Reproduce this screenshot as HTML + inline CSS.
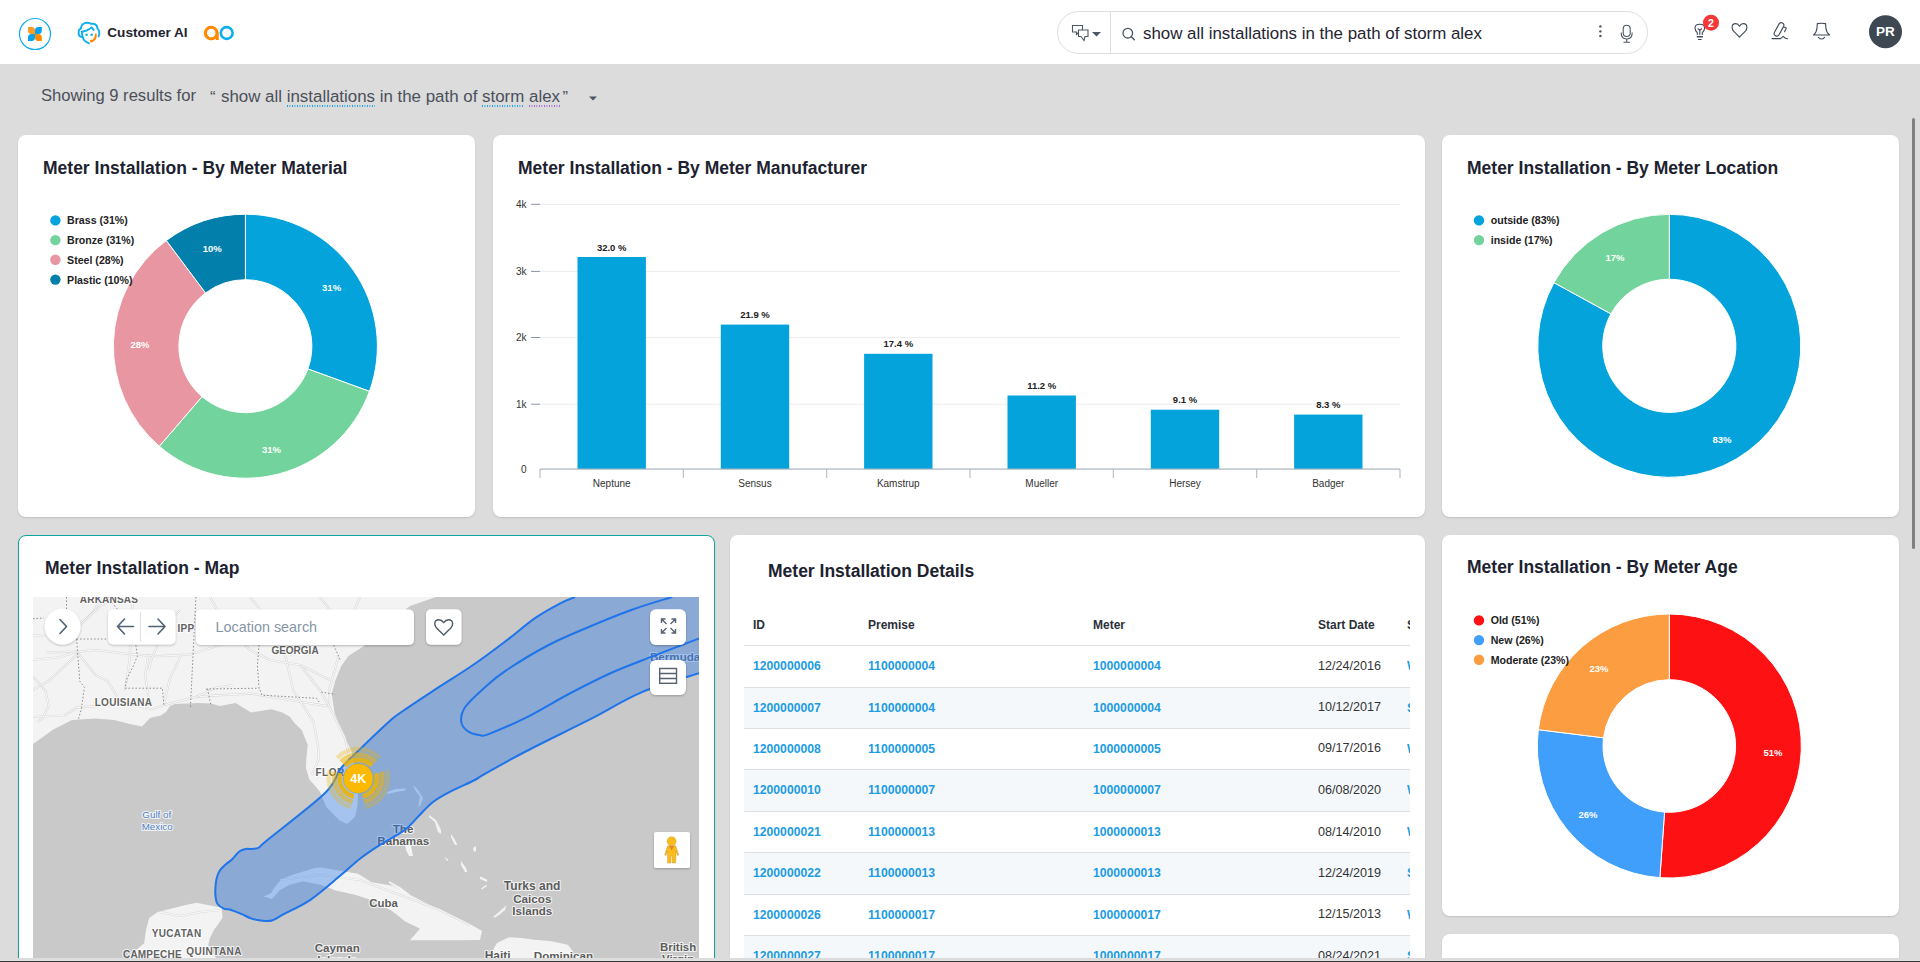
<!DOCTYPE html>
<html><head><meta charset="utf-8"><style>
*{box-sizing:border-box;margin:0;padding:0}
html,body{width:1920px;height:962px;overflow:hidden;background:#dcdcdc;font-family:"Liberation Sans",sans-serif;color:#1f2430}
.abs{position:absolute}
#hdr{position:absolute;left:0;top:0;width:1920px;height:64px;background:#fff}
.card{position:absolute;background:#fff;border-radius:8px;box-shadow:0 1px 2px rgba(0,0,0,.13)}
.ttl{position:absolute;font-size:17.5px;font-weight:bold;color:#1d2230;white-space:nowrap}
svg text{font-family:"Liberation Sans",sans-serif}
.u1,.u2{background-image:linear-gradient(to right,#0aa0e6 50%,transparent 50%);background-size:2.5px 1.5px;background-repeat:repeat-x;background-position:0 18px;padding-bottom:3px}
.u2{background-image:linear-gradient(to right,#9b5fd6 50%,transparent 50%)}
</style></head><body>
<div id="hdr">
  <svg class="abs" style="left:0;top:0" width="260" height="64">
    <circle cx="35" cy="34" r="15.5" fill="none" stroke="#0eaaf0" stroke-width="1.2"/>
    <path d="M28 27 L31.5 27 Q35 27 35 30.5 L35 34 L31.5 34 Q28 34 28 30.5 Z" fill="#ff9a22"/>
    <path d="M41.8 27 L38.3 27 Q35 27 35 30.5 L35 34 L38.3 34 Q41.8 34 41.8 30.5 Z" fill="#07a3ef"/>
    <path d="M28 41 L31.5 41 Q35 41 35 37.5 L35 34 L31.5 34 Q28 34 28 37.5 Z" fill="#07a3ef"/>
    <path d="M41.8 41 L38.3 41 Q35 41 35 37.5 L35 34 L38.3 34 Q41.8 34 41.8 37.5 Z" fill="#ff8a00"/>
    <g fill="none" stroke="#0fb0ee" stroke-width="1.9" stroke-linecap="round" stroke-linejoin="round">
      <path d="M81.5 37 Q78.7 36 78.7 34 L78.7 31.2 Q78.7 29.2 81 28.6 Q80.8 25.5 83.5 23.8 Q85.5 22.6 87.8 22.8 Q89.8 23 91.1 23.9 Q93 23.6 94.8 24.1 Q97.3 25.2 97.6 28.8 Q99.3 30 99.3 33 Q99.3 35 98.6 36.4"/>
      <path d="M82 31.8 Q87 30.8 89.5 29 Q90.8 28.2 91.6 27.4 Q92.8 28.6 93.6 30"/>
      <path d="M82 31.8 Q82 37.5 84.3 40.4 Q86.2 42.3 89 43.3"/>
    </g>
    <circle cx="86.6" cy="34.7" r="1.25" fill="#0fb0ee"/><circle cx="91.6" cy="34.7" r="1.25" fill="#0fb0ee"/>
    <path d="M95.8 34.5 Q96 38.5 93.5 40.2 Q92.5 40.9 91.5 41" fill="none" stroke="#ff8a00" stroke-width="1.9" stroke-linecap="round"/>
    <circle cx="91.5" cy="41" r="1.5" fill="#ff8a00"/>
    <text x="107.3" y="37" font-family="Liberation Sans" font-size="13.6" font-weight="bold" fill="#1f2430">Customer AI</text>
    <path d="M217.2 40 L217.2 33 A5.8 5.8 0 1 0 217.2 33.2" fill="none" stroke="#ff8a00" stroke-width="2.6"/>
    <circle cx="211" cy="33" r="5.9" fill="none" stroke="#ff8a00" stroke-width="2.6"/>
    <rect x="215.9" y="32" width="2.6" height="8" fill="#ff8a00"/>
    <circle cx="226.7" cy="33" r="5.9" fill="none" stroke="#0aaeef" stroke-width="2.6"/>
  </svg>
  <!-- search -->
  <div class="abs" style="left:1057px;top:11px;width:591px;height:43px;border:1px solid #dedede;border-radius:22px;background:#fff"></div>
  <div class="abs" style="left:1110px;top:12px;width:1px;height:41px;background:#dedede"></div>
  <svg class="abs" style="left:1060px;top:12px" width="590" height="42">
    <g fill="none" stroke="#4a5664" stroke-width="1.1">
      <path d="M12.5 13.5 H22.5 V20 H19 L16.5 22.5 V20 H12.5 Z"/>
      <path d="M18.5 18 H28 V24.5 H25 L24 28.5 L21 24.5 H18.5 Z" fill="#fff"/>
    </g>
    <path d="M32 20 L41 20 L36.5 24.5 Z" fill="#4a5664"/>
    <circle cx="67.8" cy="21.2" r="4.8" fill="none" stroke="#4a5664" stroke-width="1.3"/>
    <path d="M71.3 24.8 L74.3 27.8" stroke="#4a5664" stroke-width="1.5" stroke-linecap="round"/>
    <circle cx="540.4" cy="14.4" r="1.2" fill="#4a5664"/><circle cx="540.4" cy="19.4" r="1.2" fill="#4a5664"/><circle cx="540.4" cy="24" r="1.2" fill="#4a5664"/>
    <g fill="none" stroke="#4a5664" stroke-width="1.1">
      <rect x="563.2" y="13.2" width="7" height="11.3" rx="3.5"/>
      <path d="M561.2 20.5 Q561.2 27 566.7 27 Q572.2 27 572.2 20.5 M566.7 27 V30 M563.5 30.2 H570"/>
    </g>
  </svg>
  <div class="abs" style="left:1143px;top:23.5px;font-size:16.9px;color:#1f2430;white-space:nowrap">show all installations in the path of storm alex</div>
  <!-- right icons -->
  <svg class="abs" style="left:1680px;top:0" width="240" height="64">
    <g fill="none" stroke="#3f4a58" stroke-width="1.1" stroke-linecap="round" stroke-linejoin="round">
      <path d="M17.3 34.5 V32.6 Q15 30.6 15 27.9 Q15 24.2 19.8 24.2 Q24.6 24.2 24.6 27.9 Q24.6 30.6 22.3 32.6 V34.5"/>
      <path d="M19.8 34.5 V29.8 M18 28.8 L19.8 30.2 L21.6 28.8"/>
      <path d="M17.3 36.8 H22.3" stroke-width="1.5"/><path d="M18.4 39.5 H21.2" stroke-width="1.1"/>
      <path d="M59.5 37.2 L53.6 31.2 Q52.1 29.5 52.1 27.4 Q52.1 23.6 55.8 23.6 Q58 23.6 59.5 26.3 Q61 23.6 63.2 23.6 Q66.9 23.6 66.9 27.4 Q66.9 29.5 65.4 31.2 Z"/>
      <rect x="-2.6" y="-7.2" width="5.2" height="14.4" rx="2.6" transform="translate(99 29.4) rotate(29)"/>
      <path d="M103.8 27 L106.3 28 L104.6 31.8"/>
      <path d="M92 38.6 H100.5 L103.2 36.3 L105.5 38.3 L107.5 38.8"/>
      <path d="M133.6 35 Q136.6 32.5 137 28 L137.3 23.6 Q141.4 23 145.6 23.6 L145.9 28 Q146.3 32.5 149.6 35 Z"/>
      <path d="M138.4 37.3 Q141.5 40.8 144.6 37.3"/>
    </g>
    <circle cx="31" cy="22.7" r="8" fill="#f43838"/>
    <text x="31" y="26.6" text-anchor="middle" font-family="Liberation Sans" font-size="10.5" font-weight="bold" fill="#fff">2</text>
    <circle cx="205.5" cy="31.7" r="16.5" fill="#3d4852"/>
    <text x="205.5" y="35.8" text-anchor="middle" font-family="Liberation Sans" font-size="13.5" font-weight="bold" fill="#fff">PR</text>
  </svg>
</div>


<div class="abs" style="left:41px;top:86px;font-size:16.6px;color:#4a4f5a;white-space:nowrap">Showing 9 results for</div>
<div class="abs" style="left:210px;top:88px;font-size:16.6px;color:#4a4f5a;white-space:nowrap">&#8220;</div>
<div id="q" class="abs" style="left:221px;top:87px;font-size:16.9px;color:#4a4f5a;white-space:nowrap">show all <span class="u1">installations</span> in the path of <span class="u1">storm</span> <span class="u2">alex</span></div>
<div class="abs" style="left:562.5px;top:88px;font-size:16.6px;color:#4a4f5a;white-space:nowrap">&#8221;</div>
<svg class="abs" style="left:588px;top:95px" width="12" height="8"><path d="M1 1.5 L9 1.5 L5 5.5 Z" fill="#4a5664"/></svg>


<div class="card" style="left:18px;top:135px;width:457px;height:382px">
  <div class="ttl" style="left:25px;top:22.5px">Meter Installation - By Meter Material</div>
</div>
<div class="card" style="left:493px;top:135px;width:932px;height:382px">
  <div class="ttl" style="left:25px;top:22.5px">Meter Installation - By Meter Manufacturer</div>
</div>
<div class="card" style="left:1442px;top:135px;width:457px;height:382px">
  <div class="ttl" style="left:25px;top:22.5px">Meter Installation - By Meter Location</div>
</div>
<div class="card" style="left:18px;top:535px;width:697px;height:500px;border:1px solid #0ea59f">
  <div class="ttl" style="left:26px;top:22px">Meter Installation - Map</div>
</div>
<div class="card" style="left:730px;top:535px;width:695px;height:500px">
  <div class="ttl" style="left:38px;top:26px">Meter Installation Details</div>
</div>
<div class="card" style="left:1442px;top:535px;width:457px;height:381px">
  <div class="ttl" style="left:25px;top:22px">Meter Installation - By Meter Age</div>
</div>
<div class="card" style="left:1442px;top:934px;width:457px;height:200px"></div>

<svg class="abs" style="left:0;top:0" width="1920" height="962">
<path d="M245.40 214.20 A132 132 0 0 1 369.44 391.35 L307.89 368.94 A66.5 66.5 0 0 0 245.40 279.70 Z" fill="#04a3db" stroke="#fff" stroke-width="1"/>
<path d="M369.44 391.35 A132 132 0 0 1 159.32 446.27 L202.04 396.62 A66.5 66.5 0 0 0 307.89 368.94 Z" fill="#72d39c" stroke="#fff" stroke-width="1"/>
<path d="M159.32 446.27 A132 132 0 0 1 166.33 240.50 L205.56 292.95 A66.5 66.5 0 0 0 202.04 396.62 Z" fill="#e896a1" stroke="#fff" stroke-width="1"/>
<path d="M166.33 240.50 A132 132 0 0 1 245.40 214.20 L245.40 279.70 A66.5 66.5 0 0 0 205.56 292.95 Z" fill="#037fab" stroke="#fff" stroke-width="1"/>
<circle cx="55.4" cy="220.4" r="5.2" fill="#04a3db"/>
<text x="67.1" y="224.4" font-size="10.6" font-weight="bold" fill="#222">Brass (31%)</text>
<circle cx="55.4" cy="240.1" r="5.2" fill="#72d39c"/>
<text x="67.1" y="244.1" font-size="10.6" font-weight="bold" fill="#222">Bronze (31%)</text>
<circle cx="55.4" cy="259.7" r="5.2" fill="#e896a1"/>
<text x="67.1" y="263.7" font-size="10.6" font-weight="bold" fill="#222">Steel (28%)</text>
<circle cx="55.4" cy="279.6" r="5.2" fill="#037fab"/>
<text x="67.1" y="283.6" font-size="10.6" font-weight="bold" fill="#222">Plastic (10%)</text>
<text x="331.6" y="291.4" text-anchor="middle" font-size="9.5" font-weight="bold" fill="#fff">31%</text>
<text x="271.4" y="453.1" text-anchor="middle" font-size="9.5" font-weight="bold" fill="#fff">31%</text>
<text x="140" y="348.3" text-anchor="middle" font-size="9.5" font-weight="bold" fill="#fff">28%</text>
<text x="212.3" y="252.2" text-anchor="middle" font-size="9.5" font-weight="bold" fill="#fff">10%</text>
<path d="M1669.30 214.30 A131.5 131.5 0 1 1 1553.96 282.65 L1610.88 313.82 A66.6 66.6 0 1 0 1669.30 279.20 Z" fill="#04a3db" stroke="#fff" stroke-width="1"/>
<path d="M1553.96 282.65 A131.5 131.5 0 0 1 1669.30 214.30 L1669.30 279.20 A66.6 66.6 0 0 0 1610.88 313.82 Z" fill="#72d39c" stroke="#fff" stroke-width="1"/>
<circle cx="1479" cy="220.4" r="5.2" fill="#04a3db"/>
<text x="1490.7" y="224.4" font-size="10.6" font-weight="bold" fill="#222">outside (83%)</text>
<circle cx="1479" cy="240.1" r="5.2" fill="#72d39c"/>
<text x="1490.7" y="244.1" font-size="10.6" font-weight="bold" fill="#222">inside (17%)</text>
<text x="1615" y="261.0" text-anchor="middle" font-size="9.5" font-weight="bold" fill="#fff">17%</text>
<text x="1722" y="443.0" text-anchor="middle" font-size="9.5" font-weight="bold" fill="#fff">83%</text>
<path d="M1669.30 614.00 A132 132 0 1 1 1659.86 877.66 L1664.56 812.13 A66.3 66.3 0 1 0 1669.30 679.70 Z" fill="#fe1112" stroke="#fff" stroke-width="1"/>
<path d="M1659.86 877.66 A132 132 0 0 1 1538.31 729.68 L1603.51 737.81 A66.3 66.3 0 0 0 1664.56 812.13 Z" fill="#3f9ffb" stroke="#fff" stroke-width="1"/>
<path d="M1538.31 729.68 A132 132 0 0 1 1669.30 614.00 L1669.30 679.70 A66.3 66.3 0 0 0 1603.51 737.81 Z" fill="#fb9d40" stroke="#fff" stroke-width="1"/>
<circle cx="1479" cy="620.4" r="5.2" fill="#fe1112"/>
<text x="1490.7" y="624.4" font-size="10.6" font-weight="bold" fill="#222">Old (51%)</text>
<circle cx="1479" cy="640.1" r="5.2" fill="#3f9ffb"/>
<text x="1490.7" y="644.1" font-size="10.6" font-weight="bold" fill="#222">New (26%)</text>
<circle cx="1479" cy="659.7" r="5.2" fill="#fb9d40"/>
<text x="1490.7" y="663.7" font-size="10.6" font-weight="bold" fill="#222">Moderate (23%)</text>
<text x="1773" y="755.5" text-anchor="middle" font-size="9.5" font-weight="bold" fill="#fff">51%</text>
<text x="1588" y="818.0" text-anchor="middle" font-size="9.5" font-weight="bold" fill="#fff">26%</text>
<text x="1599" y="671.5" text-anchor="middle" font-size="9.5" font-weight="bold" fill="#fff">23%</text>
<rect x="540" y="203.8" width="860" height="1" fill="#ececec"/>
<rect x="531" y="203.8" width="9" height="1" fill="#8a96a3"/>
<text x="526.5" y="207.9" text-anchor="end" font-size="10" fill="#333">4k</text>
<rect x="540" y="270.9" width="860" height="1" fill="#ececec"/>
<rect x="531" y="270.9" width="9" height="1" fill="#8a96a3"/>
<text x="526.5" y="275.0" text-anchor="end" font-size="10" fill="#333">3k</text>
<rect x="540" y="337.0" width="860" height="1" fill="#ececec"/>
<rect x="531" y="337.0" width="9" height="1" fill="#8a96a3"/>
<text x="526.5" y="341.1" text-anchor="end" font-size="10" fill="#333">2k</text>
<rect x="540" y="403.7" width="860" height="1" fill="#ececec"/>
<rect x="531" y="403.7" width="9" height="1" fill="#8a96a3"/>
<text x="526.5" y="407.8" text-anchor="end" font-size="10" fill="#333">1k</text>
<text x="526.5" y="473" text-anchor="end" font-size="10" fill="#333">0</text>
<rect x="577.5" y="257" width="68.4" height="212.0" fill="#04a3db"/>
<text x="611.7" y="250.5" text-anchor="middle" font-size="9.5" font-weight="bold" fill="#222">32.0 %</text>
<text x="611.7" y="487" text-anchor="middle" font-size="10" fill="#333">Neptune</text>
<rect x="720.8" y="324.6" width="68.4" height="144.4" fill="#04a3db"/>
<text x="755.0" y="318.1" text-anchor="middle" font-size="9.5" font-weight="bold" fill="#222">21.9 %</text>
<text x="755.0" y="487" text-anchor="middle" font-size="10" fill="#333">Sensus</text>
<rect x="864.1" y="353.8" width="68.4" height="115.2" fill="#04a3db"/>
<text x="898.3" y="347.3" text-anchor="middle" font-size="9.5" font-weight="bold" fill="#222">17.4 %</text>
<text x="898.3" y="487" text-anchor="middle" font-size="10" fill="#333">Kamstrup</text>
<rect x="1007.5" y="395.5" width="68.4" height="73.5" fill="#04a3db"/>
<text x="1041.7" y="389.0" text-anchor="middle" font-size="9.5" font-weight="bold" fill="#222">11.2 %</text>
<text x="1041.7" y="487" text-anchor="middle" font-size="10" fill="#333">Mueller</text>
<rect x="1150.8" y="409.7" width="68.4" height="59.3" fill="#04a3db"/>
<text x="1185.0" y="403.2" text-anchor="middle" font-size="9.5" font-weight="bold" fill="#222">9.1 %</text>
<text x="1185.0" y="487" text-anchor="middle" font-size="10" fill="#333">Hersey</text>
<rect x="1294.1" y="414.6" width="68.4" height="54.4" fill="#04a3db"/>
<text x="1328.3" y="408.1" text-anchor="middle" font-size="9.5" font-weight="bold" fill="#222">8.3 %</text>
<text x="1328.3" y="487" text-anchor="middle" font-size="10" fill="#333">Badger</text>
<rect x="540" y="468.5" width="860" height="1.2" fill="#aab4bf"/>
<rect x="539.5" y="469" width="1" height="9" fill="#aab4bf"/>
<rect x="682.8" y="469" width="1" height="9" fill="#aab4bf"/>
<rect x="826.2" y="469" width="1" height="9" fill="#aab4bf"/>
<rect x="969.5" y="469" width="1" height="9" fill="#aab4bf"/>
<rect x="1112.8" y="469" width="1" height="9" fill="#aab4bf"/>
<rect x="1256.2" y="469" width="1" height="9" fill="#aab4bf"/>
<rect x="1399.5" y="469" width="1" height="9" fill="#aab4bf"/>
</svg>
<div class="abs" style="left:744px;top:590px;width:666px;height:368px;overflow:hidden">
<div class="abs" style="left:9px;top:28.2px;white-space:nowrap;font-size:12px;font-weight:bold;color:#2b2f38">ID</div>
<div class="abs" style="left:124px;top:28.2px;white-space:nowrap;font-size:12px;font-weight:bold;color:#2b2f38">Premise</div>
<div class="abs" style="left:349px;top:28.2px;white-space:nowrap;font-size:12px;font-weight:bold;color:#2b2f38">Meter</div>
<div class="abs" style="left:574px;top:28.2px;white-space:nowrap;font-size:12px;font-weight:bold;color:#2b2f38">Start Date</div>
<div class="abs" style="left:663px;top:28.2px;white-space:nowrap;font-size:12px;font-weight:bold;color:#2b2f38">Status</div>
<div class="abs" style="left:9px;top:68.9px;white-space:nowrap;font-size:12.2px;font-weight:bold;color:#1b9ce2">1200000006</div>
<div class="abs" style="left:124px;top:68.9px;white-space:nowrap;font-size:12.2px;font-weight:bold;color:#1b9ce2">1100000004</div>
<div class="abs" style="left:349px;top:68.9px;white-space:nowrap;font-size:12.2px;font-weight:bold;color:#1b9ce2">1000000004</div>
<div class="abs" style="left:574px;top:68.7px;white-space:nowrap;font-size:12.6px;color:#333">12/24/2016</div>
<div class="abs" style="left:663px;top:68.9px;white-space:nowrap;font-size:12.2px;font-weight:bold;color:#1b9ce2">Water</div>
<div class="abs" style="left:0;top:97.7px;width:666px;height:41.4px;background:#f5f8fb"></div>
<div class="abs" style="left:9px;top:110.5px;white-space:nowrap;font-size:12.2px;font-weight:bold;color:#1b9ce2">1200000007</div>
<div class="abs" style="left:124px;top:110.5px;white-space:nowrap;font-size:12.2px;font-weight:bold;color:#1b9ce2">1100000004</div>
<div class="abs" style="left:349px;top:110.5px;white-space:nowrap;font-size:12.2px;font-weight:bold;color:#1b9ce2">1000000004</div>
<div class="abs" style="left:574px;top:110.3px;white-space:nowrap;font-size:12.6px;color:#333">10/12/2017</div>
<div class="abs" style="left:663px;top:110.5px;white-space:nowrap;font-size:12.2px;font-weight:bold;color:#1b9ce2">Sewer</div>
<div class="abs" style="left:9px;top:151.6px;white-space:nowrap;font-size:12.2px;font-weight:bold;color:#1b9ce2">1200000008</div>
<div class="abs" style="left:124px;top:151.6px;white-space:nowrap;font-size:12.2px;font-weight:bold;color:#1b9ce2">1100000005</div>
<div class="abs" style="left:349px;top:151.6px;white-space:nowrap;font-size:12.2px;font-weight:bold;color:#1b9ce2">1000000005</div>
<div class="abs" style="left:574px;top:151.4px;white-space:nowrap;font-size:12.6px;color:#333">09/17/2016</div>
<div class="abs" style="left:663px;top:151.6px;white-space:nowrap;font-size:12.2px;font-weight:bold;color:#1b9ce2">Water</div>
<div class="abs" style="left:0;top:179.9px;width:666px;height:42.3px;background:#f5f8fb"></div>
<div class="abs" style="left:9px;top:193.1px;white-space:nowrap;font-size:12.2px;font-weight:bold;color:#1b9ce2">1200000010</div>
<div class="abs" style="left:124px;top:193.1px;white-space:nowrap;font-size:12.2px;font-weight:bold;color:#1b9ce2">1100000007</div>
<div class="abs" style="left:349px;top:193.1px;white-space:nowrap;font-size:12.2px;font-weight:bold;color:#1b9ce2">1000000007</div>
<div class="abs" style="left:574px;top:192.9px;white-space:nowrap;font-size:12.6px;color:#333">06/08/2020</div>
<div class="abs" style="left:663px;top:193.1px;white-space:nowrap;font-size:12.2px;font-weight:bold;color:#1b9ce2">Water</div>
<div class="abs" style="left:9px;top:234.8px;white-space:nowrap;font-size:12.2px;font-weight:bold;color:#1b9ce2">1200000021</div>
<div class="abs" style="left:124px;top:234.8px;white-space:nowrap;font-size:12.2px;font-weight:bold;color:#1b9ce2">1100000013</div>
<div class="abs" style="left:349px;top:234.8px;white-space:nowrap;font-size:12.2px;font-weight:bold;color:#1b9ce2">1000000013</div>
<div class="abs" style="left:574px;top:234.6px;white-space:nowrap;font-size:12.6px;color:#333">08/14/2010</div>
<div class="abs" style="left:663px;top:234.8px;white-space:nowrap;font-size:12.2px;font-weight:bold;color:#1b9ce2">Water</div>
<div class="abs" style="left:0;top:263.1px;width:666px;height:41.7px;background:#f5f8fb"></div>
<div class="abs" style="left:9px;top:276.1px;white-space:nowrap;font-size:12.2px;font-weight:bold;color:#1b9ce2">1200000022</div>
<div class="abs" style="left:124px;top:276.1px;white-space:nowrap;font-size:12.2px;font-weight:bold;color:#1b9ce2">1100000013</div>
<div class="abs" style="left:349px;top:276.1px;white-space:nowrap;font-size:12.2px;font-weight:bold;color:#1b9ce2">1000000013</div>
<div class="abs" style="left:574px;top:275.9px;white-space:nowrap;font-size:12.6px;color:#333">12/24/2019</div>
<div class="abs" style="left:663px;top:276.1px;white-space:nowrap;font-size:12.2px;font-weight:bold;color:#1b9ce2">Sewer</div>
<div class="abs" style="left:9px;top:317.6px;white-space:nowrap;font-size:12.2px;font-weight:bold;color:#1b9ce2">1200000026</div>
<div class="abs" style="left:124px;top:317.6px;white-space:nowrap;font-size:12.2px;font-weight:bold;color:#1b9ce2">1100000017</div>
<div class="abs" style="left:349px;top:317.6px;white-space:nowrap;font-size:12.2px;font-weight:bold;color:#1b9ce2">1000000017</div>
<div class="abs" style="left:574px;top:317.4px;white-space:nowrap;font-size:12.6px;color:#333">12/15/2013</div>
<div class="abs" style="left:663px;top:317.6px;white-space:nowrap;font-size:12.2px;font-weight:bold;color:#1b9ce2">Water</div>
<div class="abs" style="left:0;top:346.2px;width:666px;height:41.5px;background:#f5f8fb"></div>
<div class="abs" style="left:9px;top:359.1px;white-space:nowrap;font-size:12.2px;font-weight:bold;color:#1b9ce2">1200000027</div>
<div class="abs" style="left:124px;top:359.1px;white-space:nowrap;font-size:12.2px;font-weight:bold;color:#1b9ce2">1100000017</div>
<div class="abs" style="left:349px;top:359.1px;white-space:nowrap;font-size:12.2px;font-weight:bold;color:#1b9ce2">1000000017</div>
<div class="abs" style="left:574px;top:358.9px;white-space:nowrap;font-size:12.6px;color:#333">08/24/2021</div>
<div class="abs" style="left:663px;top:359.1px;white-space:nowrap;font-size:12.2px;font-weight:bold;color:#1b9ce2">Sewer</div>
<div class="abs" style="left:0;top:54.9px;width:666px;height:1.3px;background:#dddfe2"></div>
<div class="abs" style="left:0;top:96.7px;width:666px;height:1.3px;background:#dddfe2"></div>
<div class="abs" style="left:0;top:138.1px;width:666px;height:1.3px;background:#dddfe2"></div>
<div class="abs" style="left:0;top:178.9px;width:666px;height:1.3px;background:#dddfe2"></div>
<div class="abs" style="left:0;top:221.2px;width:666px;height:1.3px;background:#dddfe2"></div>
<div class="abs" style="left:0;top:262.1px;width:666px;height:1.3px;background:#dddfe2"></div>
<div class="abs" style="left:0;top:303.8px;width:666px;height:1.3px;background:#dddfe2"></div>
<div class="abs" style="left:0;top:345.2px;width:666px;height:1.3px;background:#dddfe2"></div>
</div>
<svg class="abs" style="left:0;top:0" width="1920" height="962"><defs><clipPath id="mc"><rect x="33" y="597" width="666" height="361"/></clipPath>
<filter id="sh" x="-20%" y="-20%" width="140%" height="150%"><feDropShadow dx="0" dy="1" stdDeviation="1" flood-opacity="0.25"/></filter></defs>
<g clip-path="url(#mc)">
<rect x="33" y="597" width="666" height="361" fill="#c9c9c9"/>
<path d="M33.0 597.0 L436.0 597.0 L410.0 606.0 L385.0 625.0 L364.4 645.8 L348.4 656.0 L341.1 666.2 L335.3 680.8 L331.7 693.8 L334.6 712.8 L341.1 730.2 L347.0 741.9 L351.3 750.6 L355.0 768.0 L358.0 790.0 L357.6 805.0 L355.0 817.0 L347.0 824.0 L339.0 820.0 L326.4 807.3 L320.0 791.7 L309.2 779.2 L306.0 768.0 L306.2 760.8 L307.7 744.8 L301.8 730.2 L293.3 721.7 L290.2 717.1 L282.4 712.4 L271.4 709.2 L251.0 712.4 L235.6 703.0 L220.0 706.0 L211.0 703.5 L198.0 703.0 L175.0 704.0 L170.0 706.0 L166.0 712.0 L160.8 715.5 L150.0 718.0 L142.0 726.4 L130.0 724.0 L114.0 720.0 L95.4 718.6 L72.0 720.0 L53.3 729.5 L33.0 744.0 Z" fill="#f3f3f3"/>
<path d="M118.0 962.0 L130.0 955.0 L144.2 943.2 L146.0 930.0 L149.2 917.9 L157.7 912.0 L184.6 905.3 L196.4 902.8 L221.7 907.8 L222.5 918.0 L214.0 930.0 L209.9 938.1 L208.2 944.9 L218.3 962.0 Z" fill="#f3f3f3"/>
<path d="M262.7 897.1 L271.1 893.3 L274.9 886.8 L281.4 879.3 L293.6 874.6 L315.1 868.1 L321.6 867.6 L335.7 869.9 L358.0 873.8 L371.8 882.3 L392.2 885.7 L423.9 902.1 L450.5 914.8 L470.0 924.0 L482.0 931.0 L480.0 940.0 L460.0 940.2 L409.9 940.2 L420.0 928.8 L404.8 921.2 L392.2 911.0 L371.8 900.3 L355.9 895.0 L335.7 890.5 L321.6 884.9 L302.9 881.2 L288.9 884.9 L279.5 890.5 L272.0 899.0 L265.5 897.1 Z" fill="#f3f3f3"/>
<path d="M490.0 962.0 L494.0 948.0 L497.0 943.0 L509.0 937.2 L522.0 938.0 L534.0 939.7 L550.0 941.0 L567.8 944.8 L572.0 950.0 L575.0 962.0 Z" fill="#f3f3f3"/>
<path d="M387.0 792.0 L396.0 789.0 L406.0 788.6 L405.0 790.5 L396.0 792.0 L388.0 794.0 Z" fill="#f3f3f3"/>
<path d="M413.7 785.5 L418.0 790.0 L423.0 798.0 L420.0 806.0 L418.4 805.7 L420.0 797.0 L414.0 788.0 Z" fill="#f3f3f3"/>
<path d="M405.0 843.0 L411.0 846.0 L413.0 856.0 L409.0 856.0 L406.0 850.0 Z" fill="#f3f3f3"/>
<path d="M429.0 815.0 L436.0 820.0 L441.0 830.0 L441.0 834.0 L438.0 832.0 L435.0 822.0 L429.0 817.0 Z" fill="#f3f3f3"/>
<path d="M451.0 834.0 L455.0 840.0 L457.3 845.0 L455.0 845.0 L451.0 837.0 Z" fill="#f3f3f3"/>
<path d="M473.0 848.0 L476.0 846.0 L476.0 851.0 L474.0 852.0 Z" fill="#f3f3f3"/>
<path d="M444.5 857.0 L448.6 859.8 L447.0 861.0 Z" fill="#f3f3f3"/>
<path d="M461.0 861.0 L466.0 868.0 L467.3 872.3 L465.0 872.0 L461.0 865.0 Z" fill="#f3f3f3"/>
<path d="M479.8 876.3 L487.3 879.8 L487.0 882.0 L480.0 879.0 Z" fill="#f3f3f3"/>
<path d="M481.0 888.5 L486.0 884.8 L487.0 886.0 L482.0 889.5 Z" fill="#f3f3f3"/>
<path d="M493.8 916.2 L499.0 912.0 L506.4 905.2 L505.0 910.0 L499.0 915.0 L494.0 918.0 Z" fill="#f3f3f3"/>
<path d="M389.0 881.0 L400.0 887.0 L410.0 894.5 L408.0 895.0 L398.0 889.0 L389.0 883.0 Z" fill="#f3f3f3"/>
<path d="M33.0 635.2 L45.5 636.0" fill="none" stroke="#d9d9d9" stroke-width="2.2" stroke-linejoin="round"/>
<path d="M33.0 635.2 L45.5 636.0" fill="none" stroke="#fbfbfb" stroke-width="1" stroke-linejoin="round"/>
<path d="M46.2 652.3 L79.8 651.6 L95.4 650.0 L126.5 653.9 L157.7 656.2 L188.9 654.7 L220.0 645.3 L245.0 630.0 L270.0 618.0 L300.0 612.0" fill="none" stroke="#d9d9d9" stroke-width="2.2" stroke-linejoin="round"/>
<path d="M46.2 652.3 L79.8 651.6 L95.4 650.0 L126.5 653.9 L157.7 656.2 L188.9 654.7 L220.0 645.3 L245.0 630.0 L270.0 618.0 L300.0 612.0" fill="none" stroke="#fbfbfb" stroke-width="1" stroke-linejoin="round"/>
<path d="M33.0 717.0 L64.2 715.5 L76.6 707.7 L95.4 706.1 L126.5 703.0 L151.5 709.2 L165.5 704.6 L196.7 696.8 L220.0 695.2 L251.2 693.6 L298.0 701.4 L327.6 706.1" fill="none" stroke="#d9d9d9" stroke-width="2.2" stroke-linejoin="round"/>
<path d="M33.0 717.0 L64.2 715.5 L76.6 707.7 L95.4 706.1 L126.5 703.0 L151.5 709.2 L165.5 704.6 L196.7 696.8 L220.0 695.2 L251.2 693.6 L298.0 701.4 L327.6 706.1" fill="none" stroke="#fbfbfb" stroke-width="1" stroke-linejoin="round"/>
<path d="M132.8 597.0 L129.6 659.4 L125.0 690.5" fill="none" stroke="#d9d9d9" stroke-width="2.2" stroke-linejoin="round"/>
<path d="M132.8 597.0 L129.6 659.4 L125.0 690.5" fill="none" stroke="#fbfbfb" stroke-width="1" stroke-linejoin="round"/>
<path d="M76.6 651.6 L95.4 675.0 L107.8 681.2 L117.2 696.8" fill="none" stroke="#d9d9d9" stroke-width="2.2" stroke-linejoin="round"/>
<path d="M76.6 651.6 L95.4 675.0 L107.8 681.2 L117.2 696.8" fill="none" stroke="#fbfbfb" stroke-width="1" stroke-linejoin="round"/>
<path d="M148.4 670.3 L151.5 659.4 L157.7 643.8 L165.0 625.0 L180.0 610.0" fill="none" stroke="#d9d9d9" stroke-width="2.2" stroke-linejoin="round"/>
<path d="M148.4 670.3 L151.5 659.4 L157.7 643.8 L165.0 625.0 L180.0 610.0" fill="none" stroke="#fbfbfb" stroke-width="1" stroke-linejoin="round"/>
<path d="M338.5 656.2 L329.1 690.5 L329.1 706.1 L344.7 737.3 L350.0 760.0" fill="none" stroke="#d9d9d9" stroke-width="2.2" stroke-linejoin="round"/>
<path d="M338.5 656.2 L329.1 690.5 L329.1 706.1 L344.7 737.3 L350.0 760.0" fill="none" stroke="#fbfbfb" stroke-width="1" stroke-linejoin="round"/>
<path d="M285.5 656.2 L293.3 690.5 L313.5 721.7 L318.2 747.0 L318.6 759.0 L312.0 775.0" fill="none" stroke="#d9d9d9" stroke-width="2.2" stroke-linejoin="round"/>
<path d="M285.5 656.2 L293.3 690.5 L313.5 721.7 L318.2 747.0 L318.6 759.0 L312.0 775.0" fill="none" stroke="#fbfbfb" stroke-width="1" stroke-linejoin="round"/>
<path d="M33.0 690.0 L50.0 680.0 L80.0 651.6" fill="none" stroke="#d9d9d9" stroke-width="2.2" stroke-linejoin="round"/>
<path d="M33.0 690.0 L50.0 680.0 L80.0 651.6" fill="none" stroke="#fbfbfb" stroke-width="1" stroke-linejoin="round"/>
<path d="M230.0 630.0 L250.0 650.0 L270.0 660.0 L300.0 665.0 L330.0 680.0" fill="none" stroke="#d9d9d9" stroke-width="2.2" stroke-linejoin="round"/>
<path d="M230.0 630.0 L250.0 650.0 L270.0 660.0 L300.0 665.0 L330.0 680.0" fill="none" stroke="#fbfbfb" stroke-width="1" stroke-linejoin="round"/>
<path d="M100.0 597.0 L95.0 610.0 L80.0 625.0 L62.0 636.0" fill="none" stroke="#d9d9d9" stroke-width="2.2" stroke-linejoin="round"/>
<path d="M100.0 597.0 L95.0 610.0 L80.0 625.0 L62.0 636.0" fill="none" stroke="#fbfbfb" stroke-width="1" stroke-linejoin="round"/>
<path d="M210.0 597.0 L220.0 615.0 L240.0 630.0" fill="none" stroke="#d9d9d9" stroke-width="2.2" stroke-linejoin="round"/>
<path d="M210.0 597.0 L220.0 615.0 L240.0 630.0" fill="none" stroke="#fbfbfb" stroke-width="1" stroke-linejoin="round"/>
<path d="M320.0 597.0 L330.0 610.0 L338.0 625.0 L340.0 645.0" fill="none" stroke="#d9d9d9" stroke-width="2.2" stroke-linejoin="round"/>
<path d="M320.0 597.0 L330.0 610.0 L338.0 625.0 L340.0 645.0" fill="none" stroke="#fbfbfb" stroke-width="1" stroke-linejoin="round"/>
<path d="M33.0 676.5 L45.5 690.5 L48.6 706.0 L42.4 718.6 L37.7 721.7" fill="none" stroke="#d9d9d9" stroke-width="2.2" stroke-linejoin="round"/>
<path d="M33.0 676.5 L45.5 690.5 L48.6 706.0 L42.4 718.6 L37.7 721.7" fill="none" stroke="#fbfbfb" stroke-width="1" stroke-linejoin="round"/>
<path d="M79.8 625.0 L100.0 606.4 L114.0 597.0" fill="none" stroke="#d9d9d9" stroke-width="2.2" stroke-linejoin="round"/>
<path d="M79.8 625.0 L100.0 606.4 L114.0 597.0" fill="none" stroke="#fbfbfb" stroke-width="1" stroke-linejoin="round"/>
<path d="M148.4 654.7 L145.2 675.0 L148.4 696.8 L151.5 706.1" fill="none" stroke="#d9d9d9" stroke-width="2.2" stroke-linejoin="round"/>
<path d="M148.4 654.7 L145.2 675.0 L148.4 696.8 L151.5 706.1" fill="none" stroke="#fbfbfb" stroke-width="1" stroke-linejoin="round"/>
<path d="M181.0 656.0 L170.0 678.0 L164.0 703.0" fill="none" stroke="#d9d9d9" stroke-width="2.2" stroke-linejoin="round"/>
<path d="M181.0 656.0 L170.0 678.0 L164.0 703.0" fill="none" stroke="#fbfbfb" stroke-width="1" stroke-linejoin="round"/>
<path d="M196.7 696.8 L215.0 688.0 L233.0 685.0" fill="none" stroke="#d9d9d9" stroke-width="2.2" stroke-linejoin="round"/>
<path d="M196.7 696.8 L215.0 688.0 L233.0 685.0" fill="none" stroke="#fbfbfb" stroke-width="1" stroke-linejoin="round"/>
<path d="M33.0 660.0 L60.0 657.0 L76.6 651.6" fill="none" stroke="#d9d9d9" stroke-width="2.2" stroke-linejoin="round"/>
<path d="M33.0 660.0 L60.0 657.0 L76.6 651.6" fill="none" stroke="#fbfbfb" stroke-width="1" stroke-linejoin="round"/>
<path d="M250.0 597.0 L262.0 612.0 L270.0 630.0 L285.5 656.2" fill="none" stroke="#d9d9d9" stroke-width="2.2" stroke-linejoin="round"/>
<path d="M250.0 597.0 L262.0 612.0 L270.0 630.0 L285.5 656.2" fill="none" stroke="#fbfbfb" stroke-width="1" stroke-linejoin="round"/>
<path d="M360.0 597.0 L350.0 620.0 L340.0 645.0" fill="none" stroke="#d9d9d9" stroke-width="2.2" stroke-linejoin="round"/>
<path d="M360.0 597.0 L350.0 620.0 L340.0 645.0" fill="none" stroke="#fbfbfb" stroke-width="1" stroke-linejoin="round"/>
<path d="M300.0 665.0 L320.0 690.0 L329.1 706.1" fill="none" stroke="#d9d9d9" stroke-width="2.2" stroke-linejoin="round"/>
<path d="M300.0 665.0 L320.0 690.0 L329.1 706.1" fill="none" stroke="#fbfbfb" stroke-width="1" stroke-linejoin="round"/>
<path d="M160.0 912.0 L180.0 916.0 L200.0 912.0 L220.0 910.0" fill="none" stroke="#d9d9d9" stroke-width="2.2" stroke-linejoin="round"/>
<path d="M160.0 912.0 L180.0 916.0 L200.0 912.0 L220.0 910.0" fill="none" stroke="#fbfbfb" stroke-width="1" stroke-linejoin="round"/>
<path d="M280.0 880.0 L320.0 875.0 L360.0 880.0 L400.0 895.0 L440.0 910.0 L470.0 925.0" fill="none" stroke="#d9d9d9" stroke-width="2.2" stroke-linejoin="round"/>
<path d="M280.0 880.0 L320.0 875.0 L360.0 880.0 L400.0 895.0 L440.0 910.0 L470.0 925.0" fill="none" stroke="#fbfbfb" stroke-width="1" stroke-linejoin="round"/>
<path d="M66.5 597.0 L66.5 609.0" fill="none" stroke="#8a8a8a" stroke-width="1" stroke-dasharray="1.5 2"/>
<path d="M33.0 618.8 L44.0 618.0" fill="none" stroke="#8a8a8a" stroke-width="1" stroke-dasharray="1.5 2"/>
<path d="M76.6 639.0 L106.3 639.0" fill="none" stroke="#8a8a8a" stroke-width="1" stroke-dasharray="1.5 2"/>
<path d="M76.6 639.0 L79.8 681.2 L84.4 687.4 L81.3 709.2 L78.2 720.1" fill="none" stroke="#8a8a8a" stroke-width="1" stroke-dasharray="1.5 2"/>
<path d="M135.9 645.3 L137.4 656.2 L132.8 667.1 L126.5 679.6 L125.0 688.2 L162.4 688.2 L164.0 706.1" fill="none" stroke="#8a8a8a" stroke-width="1" stroke-dasharray="1.5 2"/>
<path d="M195.9 597.0 L190.4 707.7" fill="none" stroke="#8a8a8a" stroke-width="1" stroke-dasharray="1.5 2"/>
<path d="M206.0 689.0 L259.0 688.2" fill="none" stroke="#8a8a8a" stroke-width="1" stroke-dasharray="1.5 2"/>
<path d="M207.6 689.0 L210.7 704.6" fill="none" stroke="#8a8a8a" stroke-width="1" stroke-dasharray="1.5 2"/>
<path d="M259.0 645.0 L257.4 665.6 L259.0 687.4 L262.0 695.2 L316.6 698.3 L319.8 703.0" fill="none" stroke="#8a8a8a" stroke-width="1" stroke-dasharray="1.5 2"/>
<path d="M321.3 692.1 L335.4 694.4" fill="none" stroke="#8a8a8a" stroke-width="1" stroke-dasharray="1.5 2"/>
<path d="M333.8 645.3 L340.0 659.4" fill="none" stroke="#8a8a8a" stroke-width="1" stroke-dasharray="1.5 2"/>
<path d="M108.0 597.0 L118.0 610.0" fill="none" stroke="#8a8a8a" stroke-width="1" stroke-dasharray="1.5 2"/>
<text x="109" y="603" text-anchor="middle" font-size="10" font-weight="bold" fill="#626262" letter-spacing="0.2" stroke="rgba(255,255,255,0.75)" stroke-width="2.2" paint-order="stroke" stroke-linejoin="round">ARKANSAS</text>
<text x="186" y="631.5" text-anchor="middle" font-size="10" font-weight="bold" fill="#626262" letter-spacing="0.3" stroke="rgba(255,255,255,0.75)" stroke-width="2.2" paint-order="stroke" stroke-linejoin="round">IPP</text>
<text x="295" y="654" text-anchor="middle" font-size="10" font-weight="bold" fill="#626262" letter-spacing="0" stroke="rgba(255,255,255,0.75)" stroke-width="2.2" paint-order="stroke" stroke-linejoin="round">GEORGIA</text>
<text x="123.5" y="706" text-anchor="middle" font-size="10" font-weight="bold" fill="#626262" letter-spacing="0.3" stroke="rgba(255,255,255,0.75)" stroke-width="2.2" paint-order="stroke" stroke-linejoin="round">LOUISIANA</text>
<text x="315.5" y="776" text-anchor="start" font-size="10" font-weight="bold" fill="#626262" letter-spacing="0.5" stroke="rgba(255,255,255,0.75)" stroke-width="2.2" paint-order="stroke" stroke-linejoin="round">FLOR</text>
<text x="156.8" y="818" text-anchor="middle" font-size="9.8" font-weight="normal" fill="#4f7fc6" letter-spacing="0" stroke="rgba(255,255,255,0.75)" stroke-width="2.2" paint-order="stroke" stroke-linejoin="round">Gulf of</text>
<text x="157.2" y="830" text-anchor="middle" font-size="9.8" font-weight="normal" fill="#4f7fc6" letter-spacing="0" stroke="rgba(255,255,255,0.75)" stroke-width="2.2" paint-order="stroke" stroke-linejoin="round">Mexico</text>
<text x="403.1" y="832.5" text-anchor="middle" font-size="11.7" font-weight="bold" fill="#5c5c5c" letter-spacing="0" stroke="rgba(255,255,255,0.75)" stroke-width="2.2" paint-order="stroke" stroke-linejoin="round">The</text>
<text x="403.2" y="845" text-anchor="middle" font-size="11.7" font-weight="bold" fill="#5c5c5c" letter-spacing="0" stroke="rgba(255,255,255,0.75)" stroke-width="2.2" paint-order="stroke" stroke-linejoin="round">Bahamas</text>
<text x="383.6" y="907" text-anchor="middle" font-size="11.4" font-weight="bold" fill="#5c5c5c" letter-spacing="0" stroke="rgba(255,255,255,0.75)" stroke-width="2.2" paint-order="stroke" stroke-linejoin="round">Cuba</text>
<text x="532.1" y="890" text-anchor="middle" font-size="12" font-weight="bold" fill="#5c5c5c" letter-spacing="0" stroke="rgba(255,255,255,0.75)" stroke-width="2.2" paint-order="stroke" stroke-linejoin="round">Turks and</text>
<text x="532.3" y="902.5" text-anchor="middle" font-size="11.7" font-weight="bold" fill="#5c5c5c" letter-spacing="0" stroke="rgba(255,255,255,0.75)" stroke-width="2.2" paint-order="stroke" stroke-linejoin="round">Caicos</text>
<text x="532.3" y="915" text-anchor="middle" font-size="11.6" font-weight="bold" fill="#5c5c5c" letter-spacing="0" stroke="rgba(255,255,255,0.75)" stroke-width="2.2" paint-order="stroke" stroke-linejoin="round">Islands</text>
<text x="176.6" y="937" text-anchor="middle" font-size="10" font-weight="bold" fill="#626262" letter-spacing="0.35" stroke="rgba(255,255,255,0.75)" stroke-width="2.2" paint-order="stroke" stroke-linejoin="round">YUCATAN</text>
<text x="123" y="958" text-anchor="start" font-size="10" font-weight="bold" fill="#626262" letter-spacing="0.2" stroke="rgba(255,255,255,0.75)" stroke-width="2.2" paint-order="stroke" stroke-linejoin="round">CAMPECHE</text>
<text x="186.3" y="955" text-anchor="start" font-size="10" font-weight="bold" fill="#626262" letter-spacing="0.45" stroke="rgba(255,255,255,0.75)" stroke-width="2.2" paint-order="stroke" stroke-linejoin="round">QUINTANA</text>
<text x="337.3" y="951.5" text-anchor="middle" font-size="11.6" font-weight="bold" fill="#5c5c5c" letter-spacing="0" stroke="rgba(255,255,255,0.75)" stroke-width="2.2" paint-order="stroke" stroke-linejoin="round">Cayman</text>
<text x="337.3" y="964" text-anchor="middle" font-size="11.6" font-weight="bold" fill="#5c5c5c" letter-spacing="0" stroke="rgba(255,255,255,0.75)" stroke-width="2.2" paint-order="stroke" stroke-linejoin="round">Islands</text>
<text x="497.7" y="960" text-anchor="middle" font-size="12" font-weight="bold" fill="#5c5c5c" letter-spacing="0" stroke="rgba(255,255,255,0.75)" stroke-width="2.2" paint-order="stroke" stroke-linejoin="round">Haiti</text>
<text x="563.4" y="960" text-anchor="middle" font-size="11.6" font-weight="bold" fill="#5c5c5c" letter-spacing="0" stroke="rgba(255,255,255,0.75)" stroke-width="2.2" paint-order="stroke" stroke-linejoin="round">Dominican</text>
<text x="678.1" y="951" text-anchor="middle" font-size="11.4" font-weight="bold" fill="#5c5c5c" letter-spacing="0" stroke="rgba(255,255,255,0.75)" stroke-width="2.2" paint-order="stroke" stroke-linejoin="round">British</text>
<text x="678.1" y="963" text-anchor="middle" font-size="11.4" font-weight="bold" fill="#5c5c5c" letter-spacing="0" stroke="rgba(255,255,255,0.75)" stroke-width="2.2" paint-order="stroke" stroke-linejoin="round">Virgin</text>
<text x="650" y="661" text-anchor="start" font-size="11.6" font-weight="bold" fill="#5f6f85" letter-spacing="0" stroke="rgba(255,255,255,0.75)" stroke-width="2.2" paint-order="stroke" stroke-linejoin="round">Bermuda</text>
<path d="M575.1 597.0 C572.6 598.0 567.0 599.8 560.3 603.3 C553.6 606.8 544.1 611.8 535.0 618.1 C525.9 624.4 515.7 633.6 505.5 641.3 C495.3 649.0 486.1 656.1 473.8 664.5 C461.5 672.9 443.9 683.8 431.6 691.9 C419.3 700.0 407.1 708.1 400.0 713.0 C392.9 717.9 395.6 715.7 389.2 721.5 C382.8 727.3 369.5 739.9 361.5 747.7 C353.5 755.5 347.2 760.5 341.1 768.1 C335.0 775.7 337.1 781.3 324.8 793.3 C312.5 805.3 278.4 831.0 267.4 840.0 C256.4 849.0 261.5 846.0 258.9 847.5 C256.3 849.0 254.2 848.6 252.0 848.9 C249.8 849.1 247.9 848.6 245.8 849.0 C243.7 849.4 241.5 849.9 239.3 851.5 C237.1 853.1 235.0 856.5 232.7 858.7 C230.4 860.9 227.5 862.8 225.3 864.8 C223.1 866.8 221.0 868.6 219.5 871.0 C218.0 873.4 217.2 876.2 216.5 879.0 C215.8 881.8 215.6 885.0 215.4 888.0 C215.2 891.0 215.2 894.3 215.6 897.0 C215.9 899.7 216.1 902.0 217.5 904.0 C218.9 906.0 222.2 907.9 224.3 908.8 C226.4 909.7 227.1 908.6 229.9 909.5 C232.7 910.4 237.6 912.4 241.2 913.9 C244.8 915.4 248.2 917.5 251.5 918.6 C254.8 919.7 257.4 920.2 260.8 920.5 C264.2 920.8 268.1 921.6 272.0 920.5 C275.9 919.4 277.8 917.3 284.2 913.9 C290.6 910.5 301.0 906.3 310.4 899.9 C319.8 893.5 332.1 882.5 340.4 875.6 C348.7 868.7 353.4 863.8 360.0 858.7 C366.6 853.6 372.5 849.7 380.0 844.9 C387.5 840.1 398.8 834.5 405.0 829.9 C411.2 825.3 412.8 822.0 417.4 817.4 C422.0 812.8 427.0 806.8 432.4 802.5 C437.8 798.2 442.8 795.6 449.9 791.9 C457.0 788.1 469.1 783.0 474.8 780.0 C480.6 777.0 475.8 779.0 484.4 774.2 C493.0 769.4 509.0 760.1 526.6 751.0 C544.2 741.9 570.6 729.2 589.9 719.4 C609.2 709.5 624.2 699.6 642.6 691.9 C661.0 684.2 690.4 676.1 700.0 673.0 L700 597 Z" fill="rgba(36,117,235,0.38)" stroke="none"/>
<path d="M575.1 597.0 C572.6 598.0 567.0 599.8 560.3 603.3 C553.6 606.8 544.1 611.8 535.0 618.1 C525.9 624.4 515.7 633.6 505.5 641.3 C495.3 649.0 486.1 656.1 473.8 664.5 C461.5 672.9 443.9 683.8 431.6 691.9 C419.3 700.0 407.1 708.1 400.0 713.0 C392.9 717.9 395.6 715.7 389.2 721.5 C382.8 727.3 369.5 739.9 361.5 747.7 C353.5 755.5 347.2 760.5 341.1 768.1 C335.0 775.7 337.1 781.3 324.8 793.3 C312.5 805.3 278.4 831.0 267.4 840.0 C256.4 849.0 261.5 846.0 258.9 847.5 C256.3 849.0 254.2 848.6 252.0 848.9 C249.8 849.1 247.9 848.6 245.8 849.0 C243.7 849.4 241.5 849.9 239.3 851.5 C237.1 853.1 235.0 856.5 232.7 858.7 C230.4 860.9 227.5 862.8 225.3 864.8 C223.1 866.8 221.0 868.6 219.5 871.0 C218.0 873.4 217.2 876.2 216.5 879.0 C215.8 881.8 215.6 885.0 215.4 888.0 C215.2 891.0 215.2 894.3 215.6 897.0 C215.9 899.7 216.1 902.0 217.5 904.0 C218.9 906.0 222.2 907.9 224.3 908.8 C226.4 909.7 227.1 908.6 229.9 909.5 C232.7 910.4 237.6 912.4 241.2 913.9 C244.8 915.4 248.2 917.5 251.5 918.6 C254.8 919.7 257.4 920.2 260.8 920.5 C264.2 920.8 268.1 921.6 272.0 920.5 C275.9 919.4 277.8 917.3 284.2 913.9 C290.6 910.5 301.0 906.3 310.4 899.9 C319.8 893.5 332.1 882.5 340.4 875.6 C348.7 868.7 353.4 863.8 360.0 858.7 C366.6 853.6 372.5 849.7 380.0 844.9 C387.5 840.1 398.8 834.5 405.0 829.9 C411.2 825.3 412.8 822.0 417.4 817.4 C422.0 812.8 427.0 806.8 432.4 802.5 C437.8 798.2 442.8 795.6 449.9 791.9 C457.0 788.1 469.1 783.0 474.8 780.0 C480.6 777.0 475.8 779.0 484.4 774.2 C493.0 769.4 509.0 760.1 526.6 751.0 C544.2 741.9 570.6 729.2 589.9 719.4 C609.2 709.5 624.2 699.6 642.6 691.9 C661.0 684.2 690.4 676.1 700.0 673.0" fill="none" stroke="#1f74ea" stroke-width="2" stroke-linejoin="round"/>
<path d="M672.2 597.0 C665.5 599.1 645.7 604.8 632.0 609.7 C618.3 614.6 603.9 620.5 589.9 626.5 C575.9 632.5 561.8 638.1 547.7 645.5 C533.6 652.9 516.0 663.8 505.5 670.8 C494.9 677.8 491.1 681.7 484.4 687.7 C477.7 693.7 469.3 701.1 465.4 706.7 C461.5 712.3 460.8 717.5 461.2 721.5 C461.6 725.5 464.3 728.7 467.5 731.0 C470.7 733.3 476.7 734.7 480.2 735.2 C483.7 735.7 480.9 737.1 488.6 734.1 C496.3 731.1 513.2 724.0 526.6 717.3 C540.0 710.6 554.7 701.4 568.8 694.0 C582.9 686.6 596.9 679.3 611.0 673.0 C625.1 666.7 638.4 661.9 653.2 656.1 C668.0 650.3 692.2 641.1 700.0 638.1" fill="none" stroke="#1f74ea" stroke-width="2" stroke-linejoin="round"/>
<path d="M344.8 765.5 A18.7 18.7 0 0 1 371.8 765.5" fill="none" stroke="#efb300" stroke-width="4.8" stroke-opacity="0.85"/>
<path d="M341.0 761.8 A24.1 24.1 0 0 1 375.6 761.8" fill="none" stroke="#efb300" stroke-width="4.6" stroke-opacity="0.55"/>
<path d="M337.1 758.0 A29.5 29.5 0 0 1 379.5 758.0" fill="none" stroke="#efb300" stroke-width="4.4" stroke-opacity="0.3"/>
<path d="M376.3 773.3 A18.7 18.7 0 0 1 362.8 796.6" fill="none" stroke="#efb300" stroke-width="4.8" stroke-opacity="0.85"/>
<path d="M381.5 771.9 A24.1 24.1 0 0 1 364.1 801.9" fill="none" stroke="#efb300" stroke-width="4.6" stroke-opacity="0.55"/>
<path d="M386.7 770.4 A29.5 29.5 0 0 1 365.4 807.1" fill="none" stroke="#efb300" stroke-width="4.4" stroke-opacity="0.3"/>
<path d="M353.8 796.6 A18.7 18.7 0 0 1 340.3 773.3" fill="none" stroke="#efb300" stroke-width="4.8" stroke-opacity="0.85"/>
<path d="M352.5 801.9 A24.1 24.1 0 0 1 335.1 771.9" fill="none" stroke="#efb300" stroke-width="4.6" stroke-opacity="0.55"/>
<path d="M351.2 807.1 A29.5 29.5 0 0 1 329.9 770.4" fill="none" stroke="#efb300" stroke-width="4.4" stroke-opacity="0.3"/>
<circle cx="358.3" cy="778.5" r="15" fill="#fdb900" stroke="#2a8ad0" stroke-width="0.5" stroke-opacity="0.6"/>
<text x="358.3" y="783.3" text-anchor="middle" font-size="12.5" font-weight="bold" fill="#fff">4K</text>
<circle cx="62.6" cy="626.6" r="18" fill="#fff" filter="url(#sh)"/>
<path d="M60 619.5 L66.5 626.5 L60 633.5" fill="none" stroke="#4f6275" stroke-width="1.6" stroke-linecap="round" stroke-linejoin="round"/>
<rect x="108" y="609.5" width="67.5" height="35" rx="5" fill="#fff" filter="url(#sh)"/>
<rect x="140" y="612" width="1" height="30" fill="#e2e2e2"/>
<path d="M133.5 626.5 H117.5 M124.5 619 L117.5 626.5 L124.5 634" fill="none" stroke="#4f6275" stroke-width="1.6" stroke-linecap="round" stroke-linejoin="round"/>
<path d="M149 626.5 H165 M158 619 L165 626.5 L158 634" fill="none" stroke="#4f6275" stroke-width="1.6" stroke-linecap="round" stroke-linejoin="round"/>
<rect x="196" y="609.5" width="218" height="35.5" rx="5" fill="#fff" filter="url(#sh)"/>
<text x="215.5" y="632" font-size="14.4" fill="#8595a6">Location search</text>
<rect x="426" y="609.2" width="35.5" height="35.5" rx="5" fill="#fff" filter="url(#sh)"/>
<path d="M443.7 635 L436.5 628 Q434.8 626 434.8 623.8 Q434.8 619.8 438.8 619.8 Q441.7 619.8 443.7 622.6 Q445.7 619.8 448.6 619.8 Q452.6 619.8 452.6 623.8 Q452.6 626 450.9 628 Z" fill="none" stroke="#4f5a66" stroke-width="1.4" stroke-linejoin="round"/>
<rect x="650" y="609.2" width="36" height="35.7" rx="6" fill="#fff" filter="url(#sh)"/>
<g fill="none" stroke="#566270" stroke-width="1.4"><path d="M661.5 623 V619 H665.5 M661.5 619 L666.5 624 M675.5 623 V619 H671.5 M675.5 619 L670.5 624 M661.5 629 V633 H665.5 M661.5 633 L666.5 628 M675.5 629 V633 H671.5 M675.5 633 L670.5 628"/></g>
<rect x="650" y="660" width="36" height="35" rx="6" fill="#fff" filter="url(#sh)"/>
<g fill="none" stroke="#566270" stroke-width="1.4"><rect x="659.7" y="668.5" width="16.8" height="14.8"/><path d="M659.7 673.5 H676.5 M659.7 678.5 H676.5"/></g>
<rect x="654" y="832" width="36" height="36" rx="2" fill="#fff" filter="url(#sh)"/>
<g fill="#fbbc1c" stroke="#b07a10" stroke-width="0.3"><circle cx="671.6" cy="841.2" r="4.5"/><path d="M667.5 845.8 H675.7 L678.8 855 L677.5 855.5 L676 851 L675.7 863 H672.2 V856 H671 V863 H667.5 L667.5 851 L666 855.5 L664.7 855 Z"/></g>
<path d="M668.8 846 L674.4 846 L671.6 850.5 Z" fill="#e0892a"/>
</g></svg>
<div class="abs" style="left:0;top:958px;width:1920px;height:4px;background:#dcdcdc"></div><div class="abs" style="left:0;top:960px;width:1920px;height:1px;background:#e4e4e4"></div><div class="abs" style="left:0;top:961px;width:1920px;height:1px;background:#333"></div>
<div class="abs" style="left:1912px;top:118px;width:3px;height:431px;border-radius:2px;background:#808080"></div>
</body></html>
